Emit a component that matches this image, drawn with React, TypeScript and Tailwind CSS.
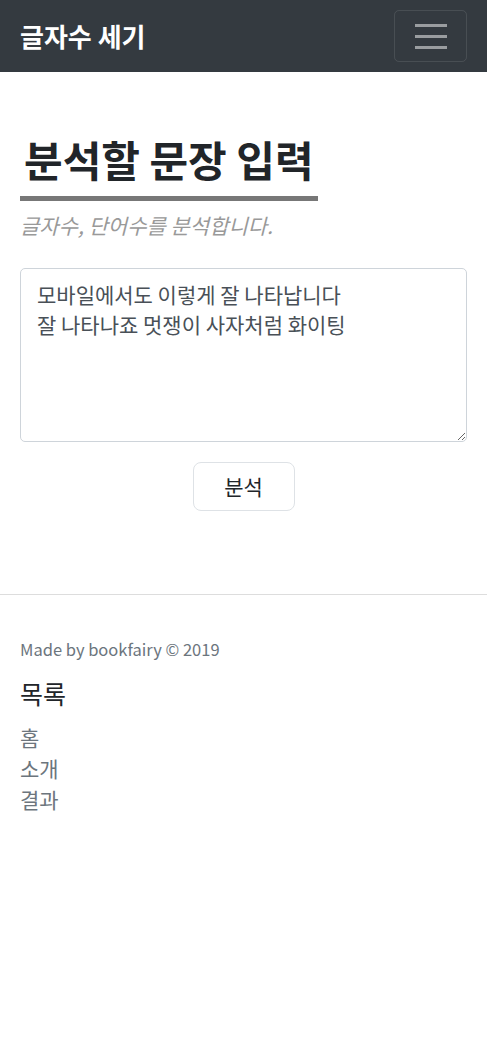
export default function App() {
  const font = { fontFamily: '"Noto Sans CJK KR", "Noto Sans", sans-serif' };
  return (
    <div className="min-h-screen bg-white text-[#212529]" style={font}>
      <nav className="flex h-[72px] items-center justify-between bg-[#343a40] px-5">
        <span className="text-[26px] font-bold leading-none text-white">글자수 세기</span>
        <button className="flex h-[52px] w-[73px] flex-col items-center justify-center gap-[8px] rounded-[5px] border border-white/10">
          <span className="block h-[3px] w-[32px] bg-white/50" />
          <span className="block h-[3px] w-[32px] bg-white/50" />
          <span className="block h-[3px] w-[32px] bg-white/50" />
        </button>
      </nav>

      <main className="px-5 pt-[62px]">
        <h1 className="inline-block border-b-[5px] border-[#777] px-1 pb-[12px] text-[42px] font-bold leading-[1.2]">
          분석할 문장 입력
        </h1>
        <p className="mt-[9px] text-[21px] italic text-[#999]">글자수, 단어수를 분석합니다.</p>

        <textarea
          className="mt-[26px] block h-[174px] w-full resize-y rounded-[5px] border border-[#ced4da] px-4 py-[10px] text-[21px] leading-[30px] text-[#495057] outline-none"
          defaultValue={"모바일에서도 이렇게 잘 나타납니다\n잘 나타나죠 멋쟁이 사자처럼 화이팅"}
        />
        <div className="mt-[20px] flex justify-center">
          <button className="h-[49px] w-[102px] rounded-[8px] border border-[#dee2e6] text-[21px] text-[#212529]">
            분석
          </button>
        </div>
      </main>

      <hr className="mt-[83px] border-t border-[#ddd]" />

      <footer className="px-5 pt-[42px]">
        <p className="text-[16.5px] text-[#6c757d]">Made by bookfairy © 2019</p>
        <h5 className="mt-[15px] text-[25px] leading-[1.3]">목록</h5>
        <ul className="mt-[13px] text-[21px] leading-[31px] text-[#6c757d]">
          <li>홈</li>
          <li>소개</li>
          <li>결과</li>
        </ul>
      </footer>
    </div>
  );
}
